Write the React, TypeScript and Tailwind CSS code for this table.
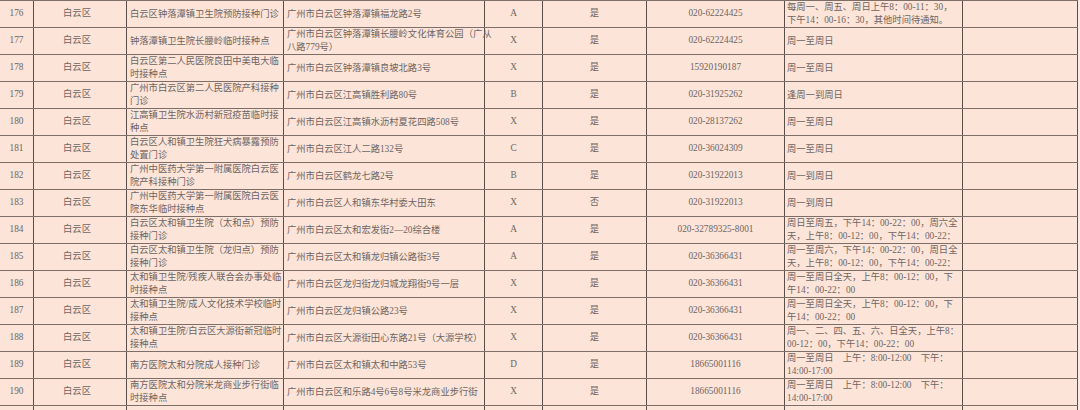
import React from 'react';

type Row = {
  no: string;
  name: string[];
  addr: string[];
  grade: string;
  adult: string;
  phone: string;
  hours: string[];
};

const ROWS: Row[] = [
  { no: '176', name: ['白云区钟落潭镇卫生院预防接种门诊'], addr: ['广州市白云区钟落潭镇福龙路2号'], grade: 'A', adult: '是', phone: '020-62224425', hours: ['每周一、周五、周日上午8：00-11：30，', '下午14：00-16：30，其他时间待通知。'] },
  { no: '177', name: ['钟落潭镇卫生院长腰岭临时接种点'], addr: ['广州市白云区钟落潭镇长腰岭文化体育公园（广从', '八路779号）'], grade: 'X', adult: '是', phone: '020-62224425', hours: ['周一至周日'] },
  { no: '178', name: ['白云区第二人民医院良田中美电大临', '时接种点'], addr: ['广州市白云区钟落潭镇良坡北路3号'], grade: 'X', adult: '是', phone: '15920190187', hours: ['周一至周日'] },
  { no: '179', name: ['广州市白云区第二人民医院产科接种', '门诊'], addr: ['广州市白云区江高镇胜利路80号'], grade: 'B', adult: '是', phone: '020-31925262', hours: ['逢周一到周日'] },
  { no: '180', name: ['江高镇卫生院水沥村新冠疫苗临时接', '种点'], addr: ['广州市白云区江高镇水沥村夏花四路508号'], grade: 'X', adult: '是', phone: '020-28137262', hours: ['周一至周日'] },
  { no: '181', name: ['白云区人和镇卫生院狂犬病暴露预防', '处置门诊'], addr: ['广州市白云区江人二路132号'], grade: 'C', adult: '是', phone: '020-36024309', hours: ['周一至周日'] },
  { no: '182', name: ['广州中医药大学第一附属医院白云医', '院产科接种门诊'], addr: ['广州市白云区鹤龙七路2号'], grade: 'B', adult: '是', phone: '020-31922013', hours: ['周一到周日'] },
  { no: '183', name: ['广州中医药大学第一附属医院白云医', '院东华临时接种点'], addr: ['广州市白云区人和镇东华村委大田东'], grade: 'X', adult: '否', phone: '020-31922013', hours: ['周一到周日'] },
  { no: '184', name: ['白云区太和镇卫生院（太和点）预防', '接种门诊'], addr: ['广州市白云区太和宏发街2—20综合楼'], grade: 'A', adult: '是', phone: '020-32789325-8001', hours: ['周日至周五，下午14：00-22：00，周六全', '天，上午8：00-12：00，下午14：00-22：'] },
  { no: '185', name: ['白云区太和镇卫生院（龙归点）预防', '接种门诊'], addr: ['广州市白云区太和镇龙归镇公路街3号'], grade: 'A', adult: '是', phone: '020-36366431', hours: ['周一至周六，下午14：00-22：00，周日全', '天，上午8：00-12：00，下午14：00-22：'] },
  { no: '186', name: ['太和镇卫生院/残疾人联合会办事处临', '时接种点'], addr: ['广州市白云区龙归街龙归城龙翔街9号一层'], grade: 'X', adult: '是', phone: '020-36366431', hours: ['周一至周日全天，上午8：00-12：00，下', '午14：00-22：00'] },
  { no: '187', name: ['太和镇卫生院/成人文化技术学校临时', '接种点'], addr: ['广州市白云区龙归镇公路23号'], grade: 'X', adult: '是', phone: '020-36366431', hours: ['周一至周日全天，上午8：00-12：00，下', '午14：00-22：00'] },
  { no: '188', name: ['太和镇卫生院/白云区大源街新冠临时', '接种点'], addr: ['广州市白云区大源街田心东路21号（大源学校）'], grade: 'X', adult: '是', phone: '020-36366431', hours: ['周一、二、四、五、六、日全天，上午8：', '00-12：00，下午14：00-22：00'] },
  { no: '189', name: ['南方医院太和分院成人接种门诊'], addr: ['广州市白云区太和镇太和中路53号'], grade: 'D', adult: '是', phone: '18665001116', hours: ['周一至周日　上午：8:00-12:00　下午：', '14:00-17:00'] },
  { no: '190', name: ['南方医院太和分院米龙商业步行街临', '时接种点'], addr: ['广州市白云区和乐路4号6号8号米龙商业步行街'], grade: 'X', adult: '是', phone: '18665001116', hours: ['周一至周日　上午：8:00-12:00　下午：', '14:00-17:00'] },
];

const font = "font-['Liberation_Serif','Noto_Sans_CJK_SC',serif]";

function Lines({ lines }: { lines: string[] }) {
  return (
    <div className="leading-[13px]">
      {lines.map((l, i) => (
        <div key={i} className="whitespace-nowrap">{l}</div>
      ))}
    </div>
  );
}

function TableRow({ r }: { r: Row }) {
  return (
    <div className="flex h-[27px] border-b border-[#7d6e68]">
      <div className="w-[34px] shrink-0 border-r border-[#5b4e49] flex items-center justify-center">{r.no}</div>
      <div className="w-[93px] shrink-0 border-r border-[#5b4e49] flex items-center justify-center pr-[6px]">白云区</div>
      <div className="w-[157px] shrink-0 border-r border-[#5b4e49] flex items-center pl-[3px]"><Lines lines={r.name} /></div>
      <div className="w-[201px] shrink-0 border-r border-[#5b4e49] flex items-center pl-[3px]"><Lines lines={r.addr} /></div>
      <div className="w-[58px] shrink-0 border-r border-[#5b4e49] flex items-center justify-center">{r.grade}</div>
      <div className="w-[104px] shrink-0 border-r border-[#5b4e49] flex items-center justify-center">{r.adult}</div>
      <div className="w-[138px] shrink-0 border-r border-[#5b4e49] flex items-center justify-center">{r.phone}</div>
      <div className="w-[178px] shrink-0 border-r border-[#5b4e49] flex items-center pl-[2px]"><Lines lines={r.hours} /></div>
      <div className="w-[115px] shrink-0 border-r border-[#5b4e49]"></div>
    </div>
  );
}

export default function App() {
  return (
    <div className={`w-[1080px] h-[410px] overflow-hidden bg-[#f7ece6] text-[9.3px] text-[#6e6562] ${font}`}>
      <div className="w-[1078px] bg-[#fce4d8] border-t border-[#7d6e68]">
        {ROWS.map((r) => (
          <TableRow key={r.no} r={r} />
        ))}
        <div className="flex h-[8px]">
          {[34, 93, 157, 201, 58, 104, 138, 178, 115].map((w, i) => (
            <div key={i} style={{ width: w }} className="shrink-0 border-r border-[#5b4e49]" />
          ))}
        </div>
      </div>
    </div>
  );
}
